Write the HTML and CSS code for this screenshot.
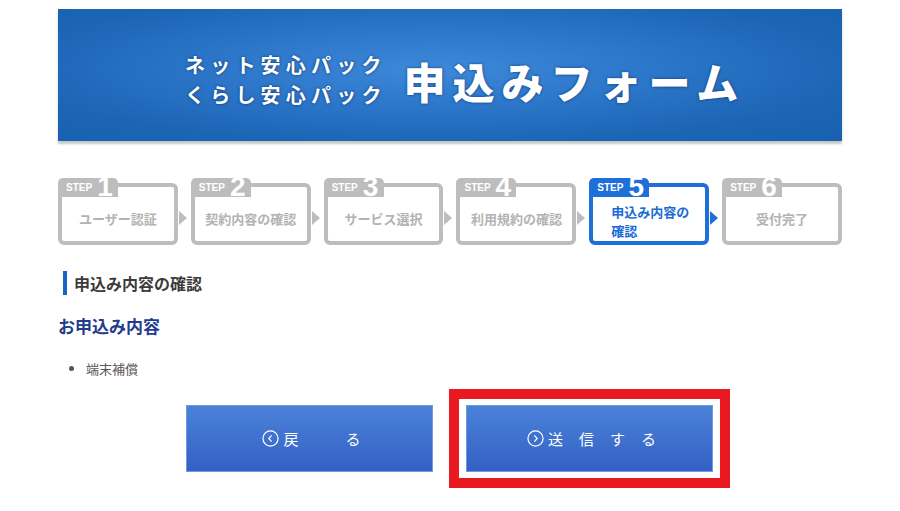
FILE: index.html
```html
<!DOCTYPE html>
<html lang="ja">
<head>
    <meta charset="UTF-8">
    <meta name="viewport" content="width=device-width, initial-scale=1.0">
    <title>申込みフォーム</title>
    <link rel="stylesheet" href="styles.css">
</head>
<body>
    <div class="page">
        <div class="banner">
            <div class="banner-sub">
                <div>ネット安心パック</div>
                <div>くらし安心パック</div>
            </div>
            <h1 class="banner-title">申込みフォーム</h1>
        </div>

        <ol class="steps">
            <li class="step">
                <div class="step-tab"><span class="step-label">STEP</span><span class="step-num">1</span></div>
                <div class="step-text">ユーザー認証</div>
            </li>
            <li class="step">
                <div class="step-tab"><span class="step-label">STEP</span><span class="step-num">2</span></div>
                <div class="step-text">契約内容の確認</div>
            </li>
            <li class="step">
                <div class="step-tab"><span class="step-label">STEP</span><span class="step-num">3</span></div>
                <div class="step-text">サービス選択</div>
            </li>
            <li class="step">
                <div class="step-tab"><span class="step-label">STEP</span><span class="step-num">4</span></div>
                <div class="step-text">利用規約の確認</div>
            </li>
            <li class="step current">
                <div class="step-tab"><span class="step-label">STEP</span><span class="step-num">5</span></div>
                <div class="step-text">申込み内容の<br>確認</div>
            </li>
            <li class="step last">
                <div class="step-tab"><span class="step-label">STEP</span><span class="step-num">6</span></div>
                <div class="step-text">受付完了</div>
            </li>
        </ol>

        <h2 class="section-title">申込み内容の確認</h2>
        <h3 class="sub-title">お申込み内容</h3>
        <ul class="items">
            <li>端末補償</li>
        </ul>

        <div class="actions">
            <button type="button" class="btn">
                <svg class="btn-icon" viewBox="0 0 18 18" width="17" height="17"><circle cx="9" cy="9" r="8" fill="none" stroke="#fff" stroke-width="1.3"/><path d="M10.2 5.6 L7.2 9 L10.2 12.4" fill="none" stroke="#fff" stroke-width="1.3"/></svg>
                <span class="btn-label">戻　る</span>
            </button>
            <div class="highlight">
                <button type="button" class="btn">
                    <svg class="btn-icon" viewBox="0 0 18 18" width="17" height="17"><circle cx="9" cy="9" r="8" fill="none" stroke="#fff" stroke-width="1.3"/><path d="M7.8 5.6 L10.8 9 L7.8 12.4" fill="none" stroke="#fff" stroke-width="1.3"/></svg>
                    <span class="btn-label">送信する</span>
                </button>
            </div>
        </div>
    </div>
</body>
</html>
```

FILE: styles.css
```css
body {
    margin: 0;
    background: #fff;
    font-family: "Noto Sans CJK JP", "Noto Sans", sans-serif;
    color: #444;
}

.page {
    width: 784px;
    margin: 0 auto;
}

/* banner */
.banner {
    margin-top: 9px;
    height: 132px;
    box-sizing: border-box;
    padding: 12px 0 0 127px;
    display: flex;
    align-items: center;
    background: radial-gradient(ellipse at 48% 45%, #3d88d8 0%, #2d78cb 35%, #1c64b4 75%, #1860b0 100%);
    box-shadow: 0 3px 2px rgba(0, 0, 0, 0.22);
    color: #fff;
    text-shadow: 0 0 3px rgba(0, 25, 70, 0.7);
}
.banner-sub {
    font-size: 20px;
    font-weight: 700;
    letter-spacing: 5.2px;
    line-height: 30px;
    margin-top: -2px;
}
.banner-title {
    margin: 0 0 0 17px;
    font-size: 42px;
    font-weight: 900;
    letter-spacing: 7px;
    line-height: 1;
}

/* steps */
.steps {
    list-style: none;
    margin: 42px 0 0;
    padding: 0;
    display: flex;
    gap: 13px;
}
.step {
    position: relative;
    width: 120px;
    height: 62px;
    box-sizing: border-box;
    border: 4px solid #bdbdbd;
    border-radius: 6px;
    display: flex;
    flex-direction: column;
}
.step::after {
    content: "";
    position: absolute;
    right: -13px;
    top: 24px;
    border-left: 8px solid #bdbdbd;
    border-top: 7px solid transparent;
    border-bottom: 7px solid transparent;
}
.step.last::after {
    display: none;
}
.step-tab {
    margin: -9px 0 0 -4px;
    width: 60px;
    height: 19px;
    background: #bdbdbd;
    border-radius: 5px 5px 0 0;
    display: flex;
    align-items: flex-end;
    padding-left: 8px;
    box-sizing: border-box;
    font-family: "Liberation Sans", Arial, sans-serif;
    font-weight: 700;
    color: #fff;
}
.step-label {
    font-size: 10px;
    line-height: 1;
    margin-bottom: 4px;
    margin-right: 5px;
}
.step-num {
    font-size: 28px;
    line-height: 20px;
    height: 20px;
}
.step-text {
    flex: 1;
    display: flex;
    align-items: center;
    justify-content: center;
    font-size: 13px;
    font-weight: 700;
    color: #b3b3b3;
    padding-bottom: 2px;
}
.step.current {
    border-color: #1e6fd9;
}
.step.current::after {
    border-left-color: #1e6fd9;
}
.step.current .step-tab {
    background: #1e6fd9;
}
.step.current .step-text {
    justify-content: flex-start;
    padding: 4px 0 0 18px;
    line-height: 19px;
    color: #1a6cd5;
}

/* content */
.section-title {
    margin: 26px 0 0 5px;
    padding-left: 7px;
    border-left: 4px solid #1565c8;
    font-size: 16px;
    line-height: 24px;
    font-weight: 700;
    color: #3b3b3b;
}
.sub-title {
    margin: 19px 0 0;
    font-size: 17px;
    line-height: 24px;
    font-weight: 700;
    color: #1f3d8c;
}
.items {
    margin: 21px 0 0;
    padding-left: 28px;
    font-size: 13px;
    line-height: 20px;
    color: #555;
}

/* buttons */
.actions {
    margin-top: 10px;
    padding-left: 128px;
    display: flex;
    align-items: center;
    gap: 16px;
}
.highlight {
    border: 10px solid #e8191f;
    padding: 6px 7px;
}
.btn {
    width: 247px;
    height: 67px;
    border: 1px solid #6c9be0;
    background: linear-gradient(#4a82d8, #3560c6);
    color: #fff;
    font-family: "Noto Sans CJK JP", sans-serif;
    font-size: 15px;
    display: flex;
    align-items: center;
    justify-content: center;
    cursor: pointer;
    padding: 0;
}
.btn-icon {
    margin-right: 4px;
}
.btn-label {
    letter-spacing: 16px;
    margin-right: -20px;
}
```
